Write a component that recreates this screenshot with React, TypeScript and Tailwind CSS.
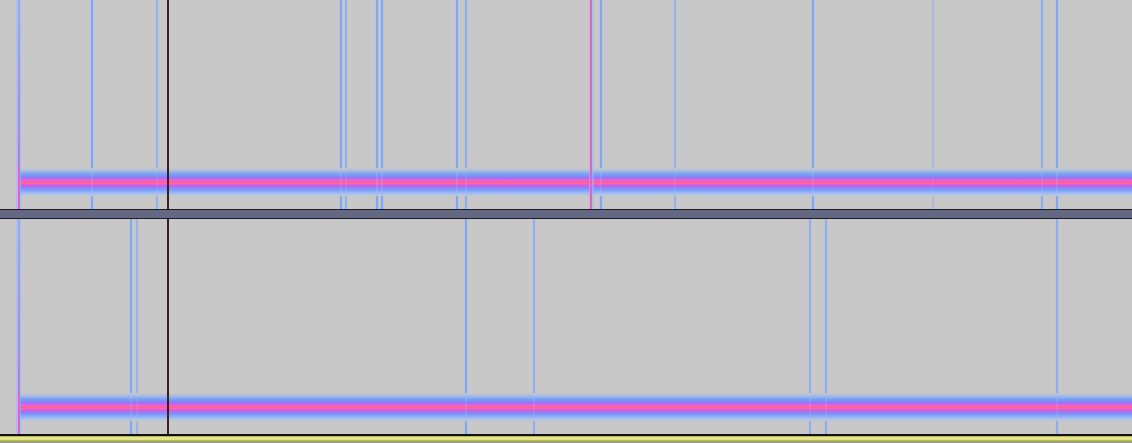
import React from "react";

type Line = { x: number; o?: number };

const topLines: Line[] = [
  { x: 92 },
  { x: 157, o: 0.7 },
  { x: 341 },
  { x: 346, o: 0.7 },
  { x: 377 },
  { x: 382 },
  { x: 457 },
  { x: 466, o: 0.8 },
  { x: 601 },
  { x: 675, o: 0.7 },
  { x: 813 },
  { x: 933, o: 0.35 },
  { x: 1042, o: 0.8 },
  { x: 1057 },
];

const bottomLines: Line[] = [
  { x: 131 },
  { x: 137, o: 0.6 },
  { x: 466 },
  { x: 534, o: 0.7 },
  { x: 810, o: 0.7 },
  { x: 826, o: 0.8 },
  { x: 1057, o: 0.8 },
];

function Track({ id, h, center, lines, pink }: { id: string; h: number; center: number; lines: Line[]; pink?: number }) {
  const bh = 28;
  return (
    <svg width="1132" height={h} className="block">
      <defs>
        <linearGradient id={`${id}-band`} x1="0" y1="0" x2="0" y2="1">
          <stop offset="0" stopColor="#c8c8c8" />
          <stop offset="0.1" stopColor="#a4bcec" />
          <stop offset="0.22" stopColor="#78a0f6" />
          <stop offset="0.33" stopColor="#9478f2" />
          <stop offset="0.41" stopColor="#dc5ee0" />
          <stop offset="0.46" stopColor="#fc68b8" />
          <stop offset="0.5" stopColor="#ff5a7c" />
          <stop offset="0.54" stopColor="#fc68b8" />
          <stop offset="0.59" stopColor="#dc5ee0" />
          <stop offset="0.67" stopColor="#9478f2" />
          <stop offset="0.78" stopColor="#78a0f6" />
          <stop offset="0.9" stopColor="#a4bcec" />
          <stop offset="1" stopColor="#c8c8c8" />
        </linearGradient>
        <linearGradient id={`${id}-edge`} x1="0" y1="0" x2="0" y2="1">
          <stop offset="0" stopColor="#8fb0f0" />
          <stop offset="0.7" stopColor="#b080e8" />
          <stop offset="1" stopColor="#e060d8" />
        </linearGradient>
      </defs>
      <rect width="1132" height={h} fill="#c8c8c8" />
      {lines.map((l) => (
        <g key={l.x} opacity={l.o ?? 1}>
          <rect x={l.x - 2} y={0} width={4} height={h} fill="#a8bfe8" opacity={0.5} />
          <rect x={l.x - 1} y={0} width={2} height={h} fill="#84a8f0" />
        </g>
      ))}
      <rect x={19} y={center - bh / 2} width={1113} height={bh} fill={`url(#${id}-band)`} />
      {lines.map((l) => (
        <rect key={`o${l.x}`} x={l.x - 1} y={center - bh / 2} width={2} height={bh} fill="#a8c0f0" opacity={0.25 * (l.o ?? 1)} />
      ))}
      {pink && (
        <g>
          <rect x={pink - 2} y={0} width={5} height={h} fill="#a0b8f0" opacity={0.6} />
          <rect x={pink - 1} y={0} width={2} height={h} fill="#d868c8" />
        </g>
      )}
      <rect x={16} y={0} width={5} height={h} fill="#9cb8f0" opacity={0.55} />
      <rect x={18} y={0} width={2} height={h} fill={`url(#${id}-edge)`} />
      <rect x={18} y={center - bh / 2} width={2} height={h - center + bh / 2} fill="#e060d8" />
      <rect x={167} y={0} width={2} height={h} fill="#3c1e1e" />
    </svg>
  );
}

export default function App() {
  return (
    <div className="flex h-[443px] w-[1132px] flex-col overflow-hidden bg-[#c8c8c8]">
      <Track id="t" h={209} center={182} lines={topLines} pink={591} />
      <div className="h-[10px] border-y border-[#1c1c24] bg-[#646882]" />
      <Track id="b" h={215} center={188} lines={bottomLines} />
      <div className="h-[2px] bg-[#101010]" />
      <div className="h-[5px] border-y border-[#b8b860] bg-[#e4e488]" />
      <div className="flex-1 bg-[#9c9c9c]" />
    </div>
  );
}
